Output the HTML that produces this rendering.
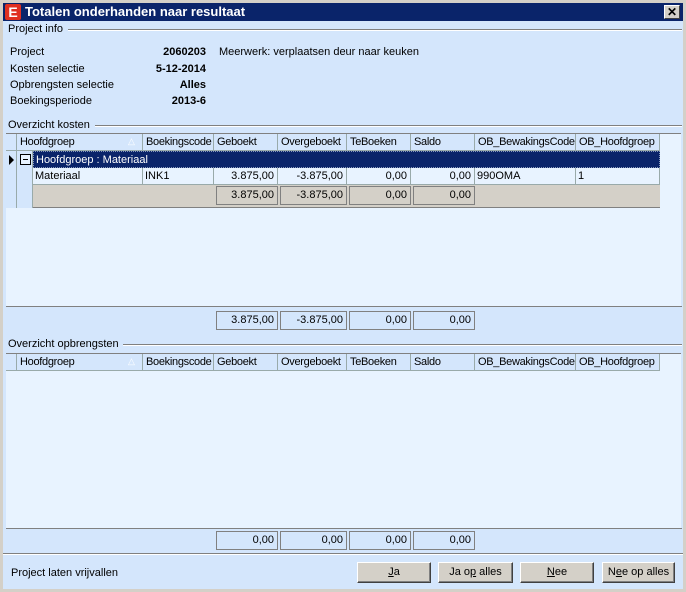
<!DOCTYPE html>
<html><head><style>
*{margin:0;padding:0;box-sizing:border-box}
body{width:686px;height:592px;background:#d4d0c8;font-family:"Liberation Sans",sans-serif;font-size:11px;color:#000;position:relative;overflow:hidden}
.a{position:absolute}
.t{position:absolute;white-space:nowrap;line-height:13px}
.hc{position:absolute;top:0;height:17px;border-right:1px solid #9aa;padding:2px 0 0 3px;white-space:nowrap;overflow:hidden;letter-spacing:-0.3px}
.box{position:absolute;border:1px solid #808080;text-align:right;padding:2px 3px 0 0;height:19px}
.btn{position:absolute;top:562px;height:21px;background:#d4d0c8;border:1px solid;border-color:#fff #404040 #404040 #fff;box-shadow:inset -1px -1px 0 #808080;text-align:center;padding-top:3px}
.dc{position:absolute;top:0;height:17px;border-right:1px solid #9aa;padding:2px 3px 0 2px;white-space:nowrap}
</style></head><body>
<div class="a" style="left:3px;top:3px;width:680px;height:18px;background:#0a246a"></div>
<div class="a" style="left:5px;top:4px;width:16px;height:16px;background:#e03020;border-radius:2px;color:#fff;font-weight:bold;font-size:14px;line-height:16px;text-align:center">E</div>
<div class="t" style="left:25px;top:5px;color:#fff;font-weight:bold;font-size:13px">Totalen onderhanden naar resultaat</div>
<div class="a" style="left:664px;top:5px;width:16px;height:14px;background:#d4d0c8;border:1px solid;border-color:#fff #404040 #404040 #fff;font-size:12px;font-weight:bold;line-height:12px;text-align:center">✕</div>
<div class="a" style="left:3px;top:21px;width:680px;height:568px;background:#d4e6fc"></div>
<div class="t" style="left:8px;top:23px">Project info</div>
<div class="a" style="left:68px;top:29px;width:614px;height:2px;border-top:1px solid #808080;border-bottom:1px solid #fff"></div>
<div class="t" style="left:10px;top:46px">Project</div>
<div class="t" style="left:10px;top:63px">Kosten selectie</div>
<div class="t" style="left:10px;top:79px">Opbrengsten selectie</div>
<div class="t" style="left:10px;top:95px">Boekingsperiode</div>
<div class="t" style="right:480px;top:46px;font-weight:bold">2060203</div>
<div class="t" style="right:480px;top:63px;font-weight:bold">5-12-2014</div>
<div class="t" style="right:480px;top:79px;font-weight:bold">Alles</div>
<div class="t" style="right:480px;top:95px;font-weight:bold">2013-6</div>
<div class="t" style="left:219px;top:46px">Meerwerk: verplaatsen deur naar keuken</div>
<div class="t" style="left:8px;top:119px">Overzicht kosten</div>
<div class="a" style="left:95px;top:125px;width:587px;height:2px;border-top:1px solid #808080;border-bottom:1px solid #fff"></div>

<div class="a" style="left:6px;top:133px;width:675px;height:173px;background:#e8f3ff;border-top:1px solid #808080"></div>
<div class="a" style="left:6px;top:134px;width:654px;height:74px;">
 <div class="a" style="left:0;top:0;width:654px;height:17px;background:#d4e6fc;border-bottom:1px solid #9aa"></div>
 <div class="hc" style="left:0;width:11px"></div>
 <div class="hc" style="left:11px;width:126px">Hoofdgroep<span style="position:absolute;left:111px;color:#fff;font-size:9px">△</span></div>
 <div class="hc" style="left:137px;width:71px">Boekingscode</div>
 <div class="hc" style="left:208px;width:64px">Geboekt</div>
 <div class="hc" style="left:272px;width:69px">Overgeboekt</div>
 <div class="hc" style="left:341px;width:64px">TeBoeken</div>
 <div class="hc" style="left:405px;width:64px">Saldo</div>
 <div class="hc" style="left:469px;width:101px">OB_BewakingsCode</div>
 <div class="hc" style="left:570px;width:84px">OB_Hoofdgroep</div>
 <div class="a" style="left:0;top:17px;width:11px;height:57px;border-right:1px solid #9aa;background:#d4e6fc"></div>
 <div class="a" style="left:3px;top:21px;width:0;height:0;border-left:5px solid #000;border-top:5px solid transparent;border-bottom:5px solid transparent"></div>
 <div class="a" style="left:11px;top:17px;width:16px;height:57px;background:#d4e6fc;border-right:1px solid #9aa"></div>
 <div class="a" style="left:14px;top:20px;width:11px;height:11px;border:1px solid #000;background:#e8f3ff"><div class="a" style="left:2px;top:4px;width:5px;height:1px;background:#000"></div></div>
 <div class="a" style="left:27px;top:17px;width:627px;height:17px;background:#0a246a;color:#fff;padding:2px 0 0 2px;border:1px dotted #8899bb">Hoofdgroep : Materiaal</div>
 <div class="a" style="left:27px;top:34px;width:627px;height:17px;background:#e8f3ff;border-bottom:1px solid #9aa">
  <div class="dc" style="left:0;width:110px">Materiaal</div>
  <div class="dc" style="left:110px;width:71px">INK1</div>
  <div class="dc" style="left:181px;width:64px;text-align:right">3.875,00</div>
  <div class="dc" style="left:245px;width:69px;text-align:right">-3.875,00</div>
  <div class="dc" style="left:314px;width:64px;text-align:right">0,00</div>
  <div class="dc" style="left:378px;width:64px;text-align:right">0,00</div>
  <div class="dc" style="left:442px;width:101px">990OMA</div>
  <div class="dc" style="left:543px;width:84px">1</div>
 </div>
 <div class="a" style="left:27px;top:51px;width:627px;height:23px;background:#d4d0c8;border-bottom:1px solid #808080"></div>
</div>
<div class="box" style="left:216px;top:186px;width:62px">3.875,00</div>
<div class="box" style="left:280px;top:186px;width:67px">-3.875,00</div>
<div class="box" style="left:349px;top:186px;width:62px">0,00</div>
<div class="box" style="left:413px;top:186px;width:62px">0,00</div>
<div class="a" style="left:6px;top:306px;width:676px;height:1px;background:#808080"></div>
<div class="box" style="left:216px;top:311px;width:62px">3.875,00</div>
<div class="box" style="left:280px;top:311px;width:67px">-3.875,00</div>
<div class="box" style="left:349px;top:311px;width:62px">0,00</div>
<div class="box" style="left:413px;top:311px;width:62px">0,00</div>

<div class="t" style="left:8px;top:338px">Overzicht opbrengsten</div>
<div class="a" style="left:123px;top:344px;width:559px;height:2px;border-top:1px solid #808080;border-bottom:1px solid #fff"></div>
<div class="a" style="left:6px;top:353px;width:675px;height:175px;background:#e8f3ff;border-top:1px solid #808080"></div>
<div class="a" style="left:6px;top:354px;width:654px;height:17px;">
 <div class="a" style="left:0;top:0;width:654px;height:17px;background:#d4e6fc;border-bottom:1px solid #9aa"></div>
 <div class="hc" style="left:0;width:11px"></div>
 <div class="hc" style="left:11px;width:126px">Hoofdgroep<span style="position:absolute;left:111px;color:#fff;font-size:9px">△</span></div>
 <div class="hc" style="left:137px;width:71px">Boekingscode</div>
 <div class="hc" style="left:208px;width:64px">Geboekt</div>
 <div class="hc" style="left:272px;width:69px">Overgeboekt</div>
 <div class="hc" style="left:341px;width:64px">TeBoeken</div>
 <div class="hc" style="left:405px;width:64px">Saldo</div>
 <div class="hc" style="left:469px;width:101px">OB_BewakingsCode</div>
 <div class="hc" style="left:570px;width:84px">OB_Hoofdgroep</div>
</div>
<div class="a" style="left:6px;top:528px;width:676px;height:1px;background:#808080"></div>
<div class="box" style="left:216px;top:531px;width:62px">0,00</div>
<div class="box" style="left:280px;top:531px;width:67px">0,00</div>
<div class="box" style="left:349px;top:531px;width:62px">0,00</div>
<div class="box" style="left:413px;top:531px;width:62px">0,00</div>
<div class="a" style="left:3px;top:553px;width:680px;height:2px;border-top:1px solid #808080;border-bottom:1px solid #fff"></div>
<div class="t" style="left:11px;top:567px">Project laten vrijvallen</div>
<div class="btn" style="left:357px;width:74px"><u>J</u>a</div>
<div class="btn" style="left:438px;width:75px">Ja o<u>p</u> alles</div>
<div class="btn" style="left:520px;width:74px"><u>N</u>ee</div>
<div class="btn" style="left:602px;width:73px">N<u>e</u>e op alles</div>
</body></html>
